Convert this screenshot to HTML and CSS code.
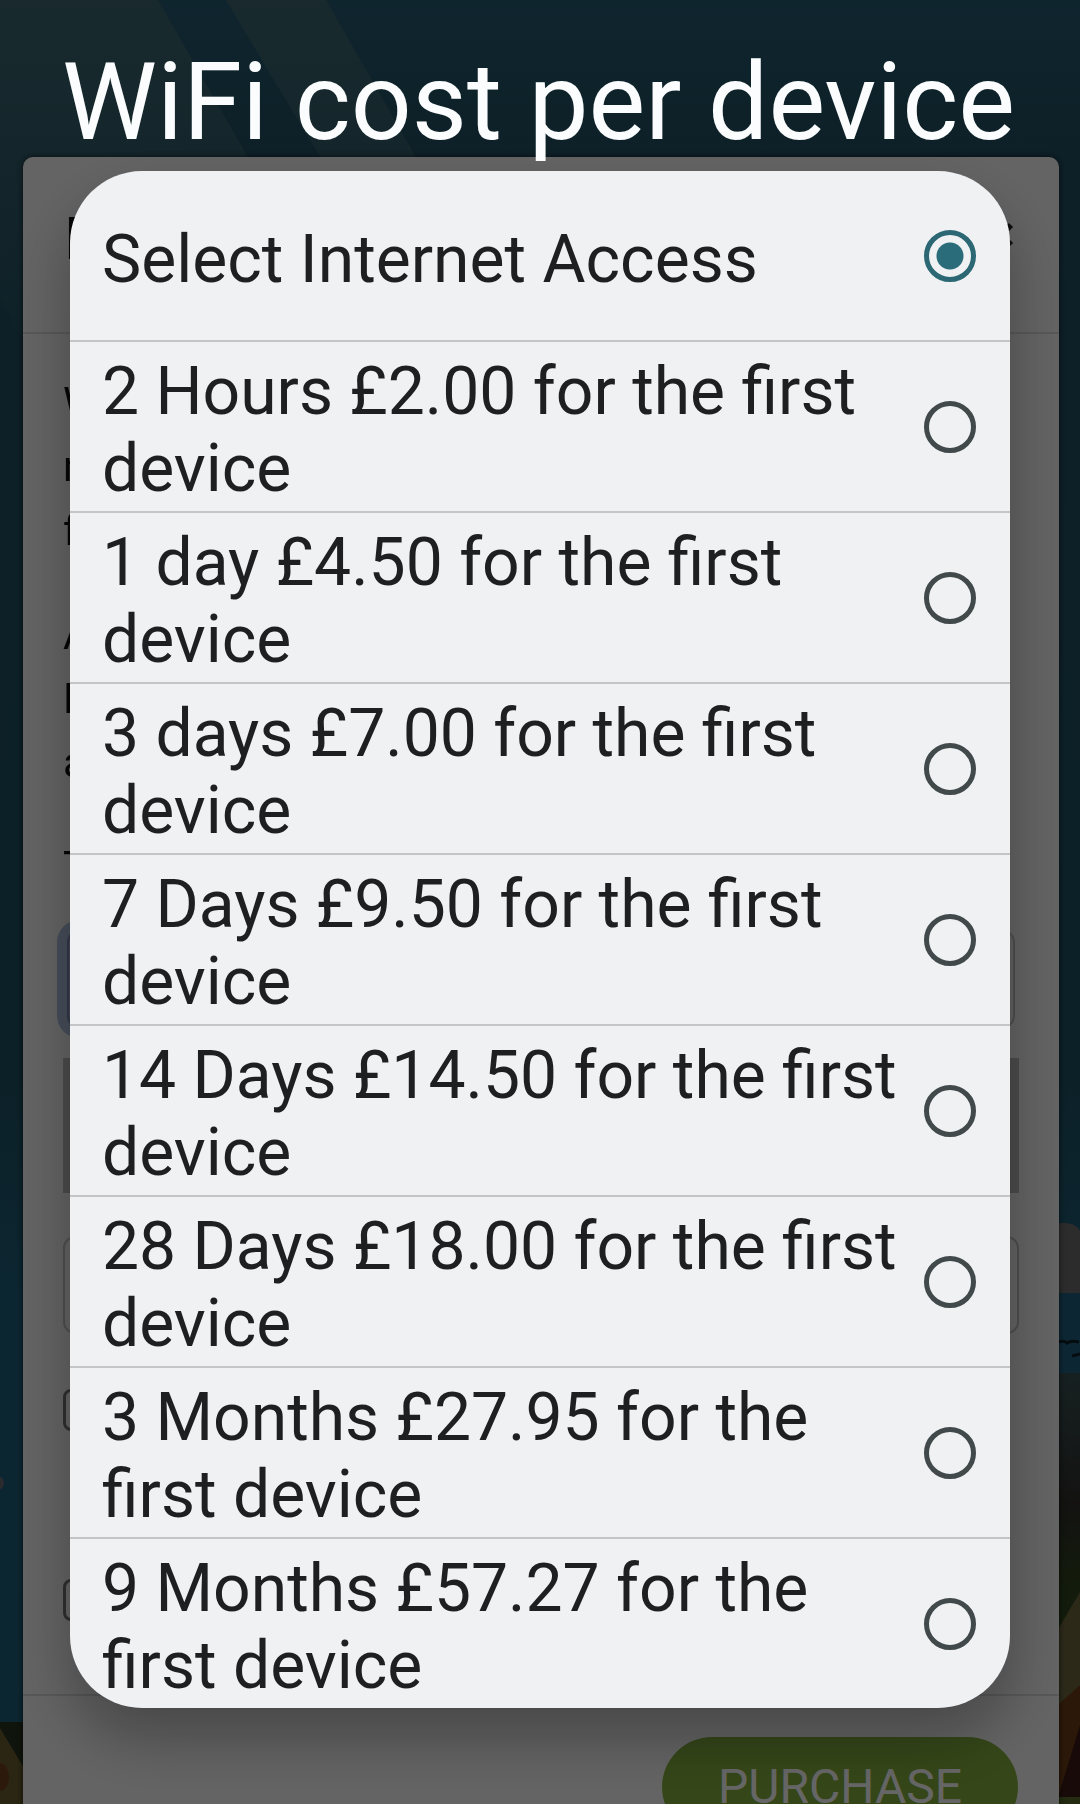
FILE: index.html
```html
<!DOCTYPE html>
<html lang="en">
<head>
  <meta charset="UTF-8">
  <meta name="viewport" content="width=device-width, initial-scale=1.0">
  <title>WiFi cost per device</title>
  <link rel="stylesheet" href="styles.css">
</head>
<body>
  <!-- Landscape behind the page -->
  <svg class="scene" viewBox="0 0 1080 1804" preserveAspectRatio="xMidYMid slice" aria-hidden="true">
    <defs>
      <linearGradient id="sky" x1="0" y1="0" x2="0" y2="1">
        <stop offset="0" stop-color="#275c74"/>
        <stop offset="0.09" stop-color="#225062"/>
        <stop offset="0.6" stop-color="#205264"/>
        <stop offset="0.72" stop-color="#1f607c"/>
        <stop offset="1" stop-color="#205f7a"/>
      </linearGradient>
      <linearGradient id="beam" x1="0" y1="0" x2="0" y2="1">
        <stop offset="0" stop-color="#3f6872"/>
        <stop offset="1" stop-color="#3f6872" stop-opacity="0.1"/>
      </linearGradient>
      <linearGradient id="hill" x1="0" y1="0" x2="0" y2="1">
        <stop offset="0" stop-color="#3a5254"/>
        <stop offset="0.3" stop-color="#302f2c"/>
        <stop offset="0.5" stop-color="#30461e"/>
        <stop offset="1" stop-color="#30461e"/>
      </linearGradient>
    </defs>
    <rect width="1080" height="1804" fill="url(#sky)"/>
    <path d="M0 0h158l200 350H30L0 300z" fill="url(#beam)"/>
    <path d="M226 0h100l200 350H436z" fill="url(#beam)"/>
    <path d="M1040 1223h24q12 0 16 8v62h-40z" fill="#706e6e"/>
    <path d="M1040 1293h40v80h-40z" fill="#1f6280"/>
    <path d="M1058 1342q6-2 9 1q4-3 12-1M1072 1356l8-2" stroke="#0a2028" stroke-width="3" fill="none"/>
    <path d="M1040 1373h40v431h-40z" fill="url(#hill)"/>
    <path d="M1080 1592l-40 68v144h40z" fill="#6f6840"/>
    <path d="M1080 1685l-40 36v83h40z" fill="#6e3e18"/>
    <path d="M1080 1725l-24 79h24z" fill="#3c1a14"/>
    <path d="M1040 1797h40v7h-40z" fill="#5a6b2c"/>
    <circle cx="-3" cy="1483" r="7" fill="#6c6c74"/>
    <path d="M0 1722h30v82H0z" fill="#26341e"/>
    <path d="M0 1728l30 50v26H0z" fill="#6b6030"/>
    <ellipse cx="0" cy="1777" rx="9" ry="14" fill="#70401c"/>
  </svg>

  <main class="card">
    <header class="card-header">
      <span>P</span>
      <button class="close-btn" type="button" aria-label="Close">
        <svg viewBox="0 0 28 28" width="28" height="28"><path d="M4 4l20 20M24 4L4 24" stroke="#222" stroke-width="6"/></svg>
      </button>
    </header>
    <div class="card-body">
      <p>W<br>n<br>f</p>
      <p>A<br>P<br>a</p>
      <p>T</p>
      <div class="access-group">
        <button class="access-btn" type="button" aria-label="Internet access"></button>
        <select class="access-select" aria-label="Internet access"></select>
      </div>
      <div class="notice"></div>
      <input class="field" type="text" aria-label="Code">
      <input class="tick" type="checkbox" aria-label="Terms">
      <input class="tick" type="checkbox" aria-label="Updates">
    </div>
    <footer class="card-footer">
      <button class="purchase-btn" type="button">PURCHASE</button>
    </footer>
  </main>

  <div class="overlay">
    <h1>WiFi cost per device</h1>
    <div class="dialog" role="radiogroup" aria-label="Internet access">
      <label class="option"><span>Select Internet Access</span><input type="radio" name="access" checked></label>
      <label class="option"><span>2 Hours £2.00 for the first device</span><input type="radio" name="access"></label>
      <label class="option"><span>1 day £4.50 for the first device</span><input type="radio" name="access"></label>
      <label class="option"><span>3 days £7.00 for the first device</span><input type="radio" name="access"></label>
      <label class="option"><span>7 Days £9.50 for the first device</span><input type="radio" name="access"></label>
      <label class="option"><span>14 Days £14.50 for the first device</span><input type="radio" name="access"></label>
      <label class="option"><span>28 Days £18.00 for the first device</span><input type="radio" name="access"></label>
      <label class="option"><span>3 Months £27.95 for the first device</span><input type="radio" name="access"></label>
      <label class="option"><span>9 Months £57.27 for the first device</span><input type="radio" name="access"></label>
    </div>
  </div>
</body>
</html>
```
FILE: styles.css
```css
* {
  box-sizing: border-box;
}
body {
  margin: 0;
  height: 100vh;
  overflow: hidden;
  background-color: #225062;
  font-family: Roboto, sans-serif;
}
.scene {
  position: fixed;
  top: 0;
  left: 0;
  width: 100%;
  height: 100%;
}

/* page card */
.card {
  position: relative;
  margin: 157px 21px 0 23px;
  background-color: #fafafa;
  border-radius: 10px;
  box-shadow: 0 0 6px rgba(0, 0, 0, 0.6);
  font-size: 42px;
  line-height: 64px;
  color: #111;
}
.card-header {
  display: flex;
  justify-content: space-between;
  align-items: center;
  height: 177px;
  padding: 0 44px 12px 41px;
  border-bottom: 2px solid #dcdcdc;
  font-size: 60px;
}
.close-btn {
  display: flex;
  padding: 0 0 8px;
  border: none;
  background: none;
}
.card-body {
  display: flex;
  flex-direction: column;
  padding: 37px 40px 73px;
}
.card-body p {
  margin: 0;
}
.card-body p + p {
  margin-top: 40px;
}
.access-group {
  display: flex;
  height: 98px;
  margin: 31px 4px 30px;
}
.access-btn {
  width: 60px;
  border: 2px solid #7c88b4;
  border-radius: 12px;
  background-color: #a8a8d0;
  box-shadow: 0 0 0 10px #b0c2e0;
}
.access-select {
  flex: 1;
  border: 2px solid #c4c4c4;
  border-radius: 12px;
  background-color: #f4f4f4;
  appearance: none;
}
.notice {
  height: 135px;
  margin-bottom: 43px;
  background-color: #bdbdbd;
}
.field {
  height: 98px;
  margin-bottom: 55px;
  border: 2px solid #c4c4c4;
  border-radius: 12px;
  background-color: #fafafa;
}
.tick {
  appearance: none;
  width: 42px;
  height: 42px;
  margin: 0 0 148px;
  border: 3px solid #777;
  border-radius: 8px;
}
.tick:last-child {
  margin-bottom: 0;
}
.card-footer {
  display: flex;
  justify-content: flex-end;
  padding: 41px;
  border-top: 2px solid #dcdcdc;
}
.purchase-btn {
  padding: 20px 56px;
  border: none;
  border-radius: 60px;
  background-color: #84b03e;
  font-family: inherit;
  font-size: 48px;
  line-height: 60px;
  color: #fff;
}

/* access picker */
.overlay {
  position: fixed;
  top: 0;
  left: 0;
  width: 100%;
  height: 100%;
  padding: 35px 70px 0;
  background-color: rgba(0, 0, 0, 0.6);
}
h1 {
  margin: 0 -8px;
  font-size: 107px;
  font-weight: 400;
  line-height: 136px;
  white-space: nowrap;
  color: #fafcfd;
}
.dialog {
  overflow: hidden;
  border-radius: 72px;
  background-color: #eff1f3;
  box-shadow: 0 30px 60px rgba(0, 0, 0, 0.3);
}
.option {
  display: flex;
  align-items: center;
  justify-content: space-between;
  gap: 14px;
  min-height: 171px;
  padding: 0 34px 0 32px;
  border-bottom: 2px solid #c3c5c6;
  font-size: 66px;
  line-height: 77px;
  color: #1d1f21;
}
.option:last-child {
  min-height: 169px;
  border-bottom: none;
}
.option span {
  padding-top: 7px;
}
.option input {
  appearance: none;
  flex: none;
  width: 52px;
  height: 52px;
  margin: 0;
  border: 5px solid #42494a;
  border-radius: 50%;
}
.option input:checked {
  border-color: #2b6874;
  background: radial-gradient(circle, #2b6c7b 13px, transparent 14px);
}
```
